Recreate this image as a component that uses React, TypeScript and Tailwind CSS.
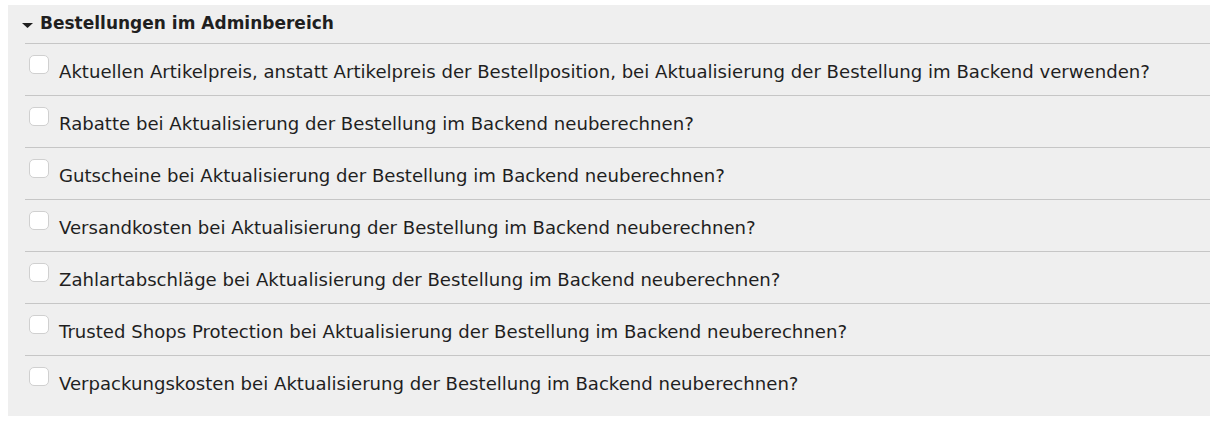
import React from "react";

const options = [
  "Aktuellen Artikelpreis, anstatt Artikelpreis der Bestellposition, bei Aktualisierung der Bestellung im Backend verwenden?",
  "Rabatte bei Aktualisierung der Bestellung im Backend neuberechnen?",
  "Gutscheine bei Aktualisierung der Bestellung im Backend neuberechnen?",
  "Versandkosten bei Aktualisierung der Bestellung im Backend neuberechnen?",
  "Zahlartabschläge bei Aktualisierung der Bestellung im Backend neuberechnen?",
  "Trusted Shops Protection bei Aktualisierung der Bestellung im Backend neuberechnen?",
  "Verpackungskosten bei Aktualisierung der Bestellung im Backend neuberechnen?",
];

const App = () => {
  return (
    <div className="bg-white min-h-screen pt-[5px] pl-2 font-['DejaVu_Sans',sans-serif] text-[#1f1f1f]">
      <section className="bg-[#efefef] pb-[9px]">
        <div className="flex items-center h-[38px] pl-[14px]">
          <svg width="11" height="5" viewBox="0 0 11 5" className="mr-[7px] mt-[3px]">
            <polygon points="0,0 11,0 5.5,5" fill="#1f1f1f" />
          </svg>
          <span className="font-bold text-[17px] leading-[22px] mb-[3px]">Bestellungen im Adminbereich</span>
        </div>
        <div className="ml-[17px]">
          {options.map((text) => (
            <label key={text} className="flex items-center h-[52px] border-t border-[#c6c6c6] pl-1 cursor-pointer">
              <span className="w-[20px] h-[19px] mb-[10px] rounded-[5px] bg-white border border-[#d0d0d0] shrink-0" />
              <span className="ml-[10px] text-[18.1px] leading-[22px] mt-[4px] whitespace-nowrap">{text}</span>
            </label>
          ))}
        </div>
      </section>
    </div>
  );
};

export default App;
